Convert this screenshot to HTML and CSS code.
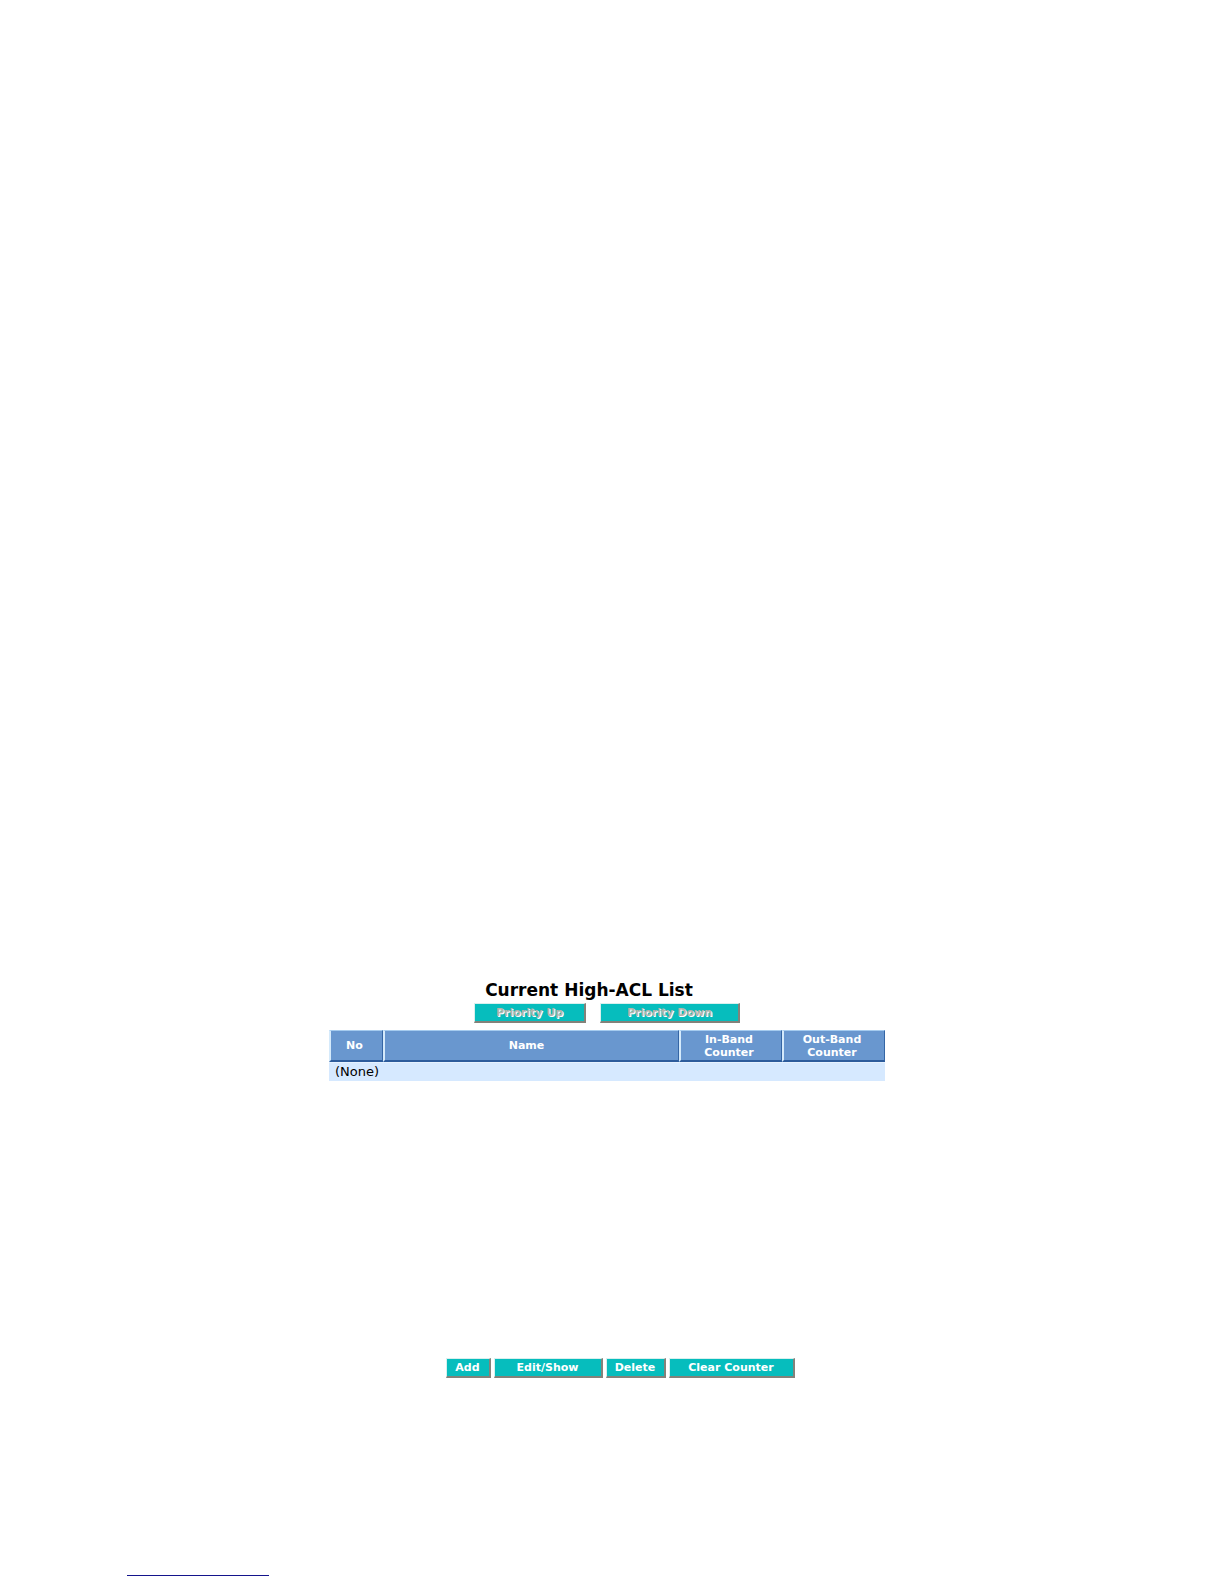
FILE: index.html
```html
<!DOCTYPE html>
<html lang="en">
<head>
  <meta charset="UTF-8">
  <meta name="viewport" content="width=device-width, initial-scale=1.0">
  <title>Current High-ACL List</title>
  <link rel="stylesheet" href="styles.css">
</head>
<body>

  <main class="acl-panel">
    <h1>Current High-ACL List</h1>

    <div class="priority-buttons">
      <button type="button" class="btn-up" disabled>Priority Up</button>
      <button type="button" class="btn-down" disabled>Priority Down</button>
    </div>

    <table class="acl-table">
      <thead>
        <tr>
          <th class="col-no">No</th>
          <th class="col-name">Name</th>
          <th class="col-counter">In-Band<br>Counter</th>
          <th class="col-counter">Out-Band<br>Counter</th>
        </tr>
      </thead>
      <tbody>
        <tr>
          <td colspan="4">(None)</td>
        </tr>
      </tbody>
    </table>

    <div class="action-buttons">
      <button type="button" class="btn-add">Add</button>
      <button type="button" class="btn-edit">Edit/Show</button>
      <button type="button" class="btn-delete">Delete</button>
      <button type="button" class="btn-clear">Clear Counter</button>
    </div>
  </main>

  <footer class="page-footer">
    <hr class="footer-line">
  </footer>

</body>
</html>
```

FILE: styles.css
```css
* {
  margin: 0;
  padding: 0;
  box-sizing: border-box;
}

body {
  font-family: Verdana, "DejaVu Sans", sans-serif;
  background-color: #ffffff;
  color: #000000;
  display: flex;
  flex-direction: column;
  min-height: 100vh;
}

.acl-panel {
  width: 100%;
  max-width: 566px;
  margin: 0 auto;
  padding: 978px 10px 0 0;
}

h1 {
  font-size: 17px;
  line-height: 25px;
  padding-right: 36px;
  text-align: center;
}

button {
  height: 20px;
  background-color: #06bdbd;
  color: #ffffff;
  font-family: inherit;
  font-size: 11px;
  font-weight: bold;
  line-height: 16px;
  border: 1px solid;
  border-color: #d8f0ee #83827a #83827a #d8f0ee;
  border-right-width: 2px;
  border-bottom-width: 2px;
  cursor: pointer;
}

/* embossed label on the disabled buttons */
button:disabled {
  color: #b4b4ac;
  text-shadow: 1px 1px 0 #ffffff;
  cursor: default;
}

.priority-buttons {
  display: flex;
  justify-content: center;
  gap: 14px;
  margin-bottom: 7px;
}

.btn-up {
  width: 112px;
}

.btn-down {
  width: 140px;
}

.acl-table {
  width: 100%;
  table-layout: fixed;
  border-collapse: separate;
  border-spacing: 0;
}

.acl-table th {
  height: 32px;
  padding-right: 4px;
  background-color: #6997cf;
  color: #ffffff;
  font-size: 11px;
  line-height: 13px;
  border: 1px solid;
  border-color: #a5cbef #3566a5 #2d5c9c #d5eafb;
  border-bottom-width: 2px;
  border-left-width: 2px;
}

.acl-table .col-name {
  padding-right: 10px;
}

.col-no {
  width: 54px;
}

.col-counter {
  width: 103px;
}

.acl-table td {
  height: 19px;
  padding: 0 6px;
  background-color: #d6e9ff;
  font-size: 13px;
  line-height: 18px;
  border-top: 1px solid #e6f2ff;
}

.action-buttons {
  display: flex;
  justify-content: center;
  gap: 3px;
  padding-left: 26px;
  margin-top: 277px;
}

.btn-add {
  width: 45px;
}

.btn-edit {
  width: 109px;
}

.btn-delete {
  width: 60px;
}

.btn-clear {
  width: 126px;
}

.page-footer {
  margin-top: auto;
  padding: 0 127px 8px;
}

.footer-line {
  width: 142px;
  border: none;
  border-top: 1px solid #14148c;
}
```
